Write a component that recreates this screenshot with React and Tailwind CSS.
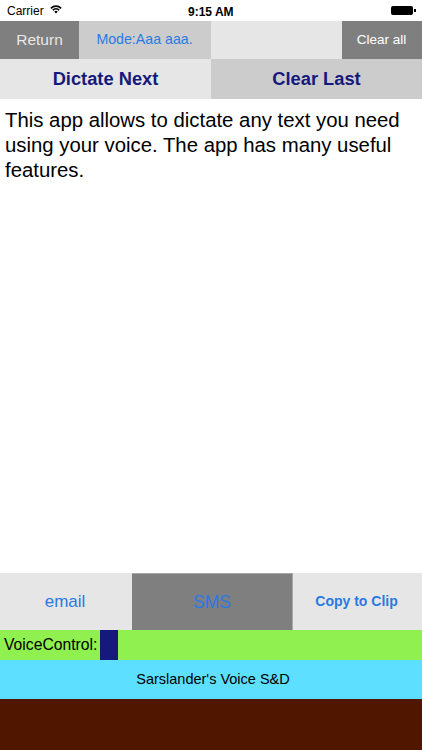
export default function App() {
  return (
    <div className="flex h-[750px] w-[422px] flex-col overflow-hidden bg-white font-['Liberation_Sans',sans-serif]">
      {/* status bar */}
      <div className="relative flex h-[21px] items-center justify-between pl-[7px] pr-[6px] text-[12px] text-black">
        <div className="flex items-center gap-[6px]">
          <span>Carrier</span>
          <svg width="12" height="9" viewBox="0 0 14 10" className="mb-[3px]">
            <path d="M1 3.6 A8.5 8.5 0 0 1 13 3.6" fill="none" stroke="#000" strokeWidth="1.9" />
            <path d="M3.3 5.8 A5.3 5.3 0 0 1 10.7 5.8" fill="none" stroke="#000" strokeWidth="1.9" />
            <path d="M5 7.6 A2.8 2.8 0 0 1 9 7.6 L7 9.8 Z" fill="#000" />
          </svg>
        </div>
        <span className="absolute left-[188px] top-[3px] text-[12px] font-bold">9:15 AM</span>
        <div className="flex items-center gap-[1px]">
          <div className="h-[9px] w-[22px] rounded-[2px] bg-black" />
          <div className="h-[3px] w-[2px] bg-black" />
        </div>
      </div>

      {/* top buttons */}
      <div className="flex h-[38px] text-[#e8e8e8]">
        <button className="w-[79px] bg-[#7f7f7f] text-[15.5px]">Return</button>
        <button className="w-[132px] bg-[#cccccc] pr-[1px] text-[14.2px] text-[#2a7ae2]">Mode:Aaa aaa.</button>
        <div className="w-[131px] bg-[#e6e6e6]" />
        <button className="w-[80px] bg-[#7f7f7f] pr-[1px] text-[13.5px] text-white">Clear all</button>
      </div>
      <div className="flex h-[40px] text-[18.3px] font-bold text-[#16197c]">
        <button className="flex-1 bg-[#e6e6e6]">Dictate Next</button>
        <button className="flex-1 bg-[#cccccc]">Clear Last</button>
      </div>

      {/* text area */}
      <p className="flex-1 px-[5px] pt-[9px] text-[20.35px] leading-[25px] text-black">
        This app allows to dictate any text you need using your voice. The app has many useful features.
      </p>

      {/* share buttons */}
      <div className="flex h-[57px] text-[#2a7ae2]">
        <button className="w-[132px] bg-[#e6e6e6] pr-[2px] text-[17px]">email</button>
        <button className="w-[161px] border-t border-r border-[#a8a8a8] bg-[#7f7f7f] text-[17.5px]">SMS</button>
        <button className="flex-1 bg-[#e6e6e6] pr-[2px] text-[14px] font-bold">Copy to Clip</button>
      </div>

      <div className="flex h-[30px] items-center bg-[#8ff04f] pl-[4px] text-[15.7px] text-black">
        <span>VoiceControl:</span>
        <div className="ml-[3px] h-full w-[18px] bg-[#16197c]" />
      </div>
      <div className="flex h-[39px] items-center justify-center bg-[#5ddfff] pl-[4px] text-[14.5px] text-black">
        Sarslander's Voice S&amp;D
      </div>
      <div className="h-[51px] bg-[#501600]" />
    </div>
  )
}
